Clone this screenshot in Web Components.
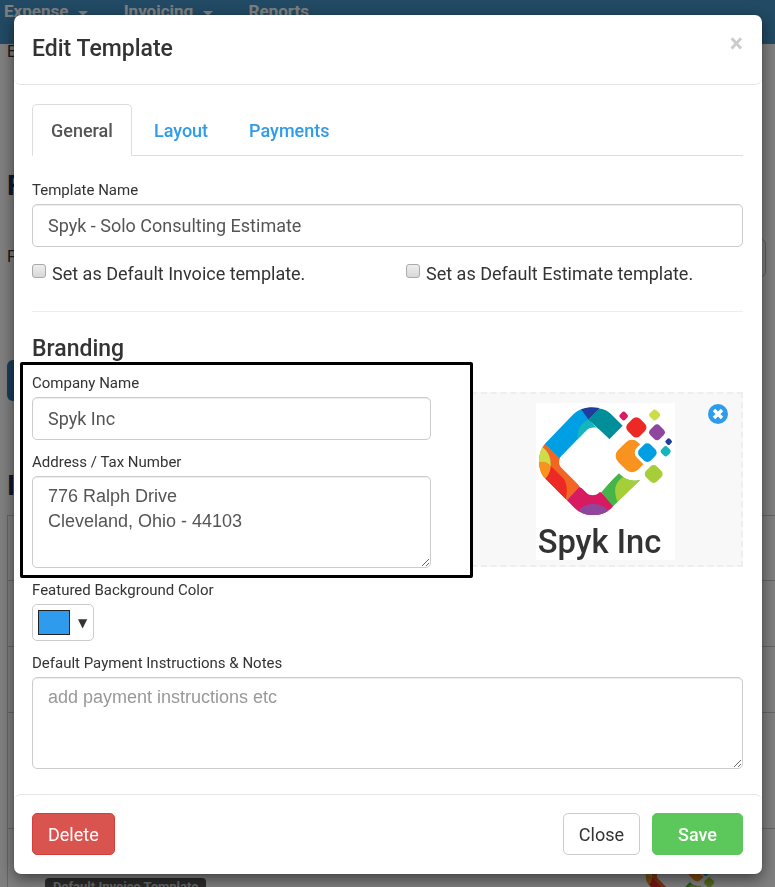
<!DOCTYPE html>
<html lang="en">
<head>
<meta charset="utf-8">
<title>Edit Template</title>
<style>
    body {
        margin: 0;
        background: #fff;
        color: #333;
        font: 18px/25px Roboto, "Open Sans", sans-serif;
    }
</style>
</head>
<body>

<app-page></app-page>

<modal-dialog heading="Edit Template">
    <tab-bar></tab-bar>
    <template-form></template-form>
    <action-button slot="left" kind="danger">Delete</action-button>
    <action-button slot="right">Close</action-button>
    <action-button slot="right" kind="success">Save</action-button>
</modal-dialog>

<script>
class Base extends HTMLElement {

    connectedCallback() {
        if(this.shadowRoot) return;

        this.attachShadow({ mode: 'open' });
        this.shadowRoot.innerHTML = `
            <style>
                *, *::before, *::after { box-sizing: border-box; }
                :host { display: block; }
            </style>
            ${this.template()}
        `;
        this.ready();
    }

    ready() {

    }

}

// rounded squares standing on a corner: x, y, half diagonal, colour
const dots = [
    [281, 63, 13, '#d81b60'],
    [374, 60, 16, '#cddc49'],
    [319, 97, 30, '#ec2924'],
    [381, 112, 23, '#8e479c'],
    [416, 140, 10, '#213d9a'],
    [407, 169, 15, '#14b5bd'],
    [306, 183, 49, '#f7931e'],
    [352, 173, 38, '#fff'],
    [352, 173, 28, '#009fe3'],
    [371, 237, 27, '#a6ce39']
];

class SpykLogo extends Base {

    dot([x, y, half, color]) {
        const side = Math.round(half * 1.72);

        return `<rect x="${x - side / 2}" y="${y - side / 2}" width="${side}" height="${side}"
            rx="${side * 0.3}" fill="${color}" transform="rotate(45 ${x} ${y})"/>`;
    }

    template() {
        const name = this.getAttribute('name');

        return `
            <style>
                svg { display: block; width: 100%; }
                rect.back { fill: #fff; }
                text { font: 500 98px Roboto, sans-serif; fill: #333; }
            </style>
            <svg viewBox="18 24 417 471" role="img" aria-label="Logo">
                <clipPath id="ring">
                    <path d="M278 92L248 62C220 30 160 28 130 58L45 146C21 172 21 225 45 250L130 335C160 369 220 370 250 333L330 255C305 262 284 253 267 235L206 294C196 303 180 303 170 294L94 218C85 209 85 195 94 183L170 105C180 94 198 94 208 104L238 133Z"/>
                </clipPath>
                <rect class="back" x="18" y="24" width="417" height="471"/>
                <g clip-path="url(#ring)">
                    <path fill="#f26522" d="M20 120L45 147 100 200 150 277 106 320 20 260Z"/>
                    <path fill="#009fe3" d="M40 143L150 34 178 73 200 110 88 190Z"/>
                    <path fill="#14b5bd" d="M176 73C150 87 140 105 142 134L220 120Z"/>
                    <path fill="#213d9a" d="M150 38L160 25 200 25 208 42 176 74Z"/>
                    <path fill="#008f9a" d="M208 40L290 60 290 133 238 133 176 74 Z"/>
                    <path fill="#cddc49" d="M20 160L38 157C56 172 63 188 62 213 50 200 38 198 20 204Z"/>
                    <path fill="#f7931e" d="M20 204C38 196 52 202 62 214 62 230 56 240 44 254L20 240Z"/>
                    <path fill="#ec2924" d="M44 254C56 240 60 232 63 214L100 250C112 266 113 290 106 320Z"/>
                    <path fill="#d81b60" d="M106 320L148 276 180 290 214 292 252 332 230 380 140 380Z"/>
                    <ellipse fill="#8e479c" cx="190" cy="366" rx="50" ry="39"/>
                    <path fill="#45b549" d="M214 292L267 230 340 250 250 335Z"/>
                    <path fill="#a6ce39" d="M279 246C252 264 250 290 264 325L340 250Z"/>
                </g>
                ${dots.map(this.dot).join('')}
                ${name ? `<text x="23" y="474">${name}</text>` : ''}
            </svg>
        `;
    }

}

class AppPage extends Base {

    template() {
        return `
            <style>
                :host { height: 100vh; overflow: hidden; }
                nav {
                    display: flex;
                    gap: 36px;
                    height: 44px;
                    padding: 0 4px;
                    background: #4494c8;
                }
                nav a {
                    color: #fff;
                    font-size: 17px;
                    font-weight: 700;
                    line-height: 23px;
                    text-decoration: none;
                }
                nav i {
                    display: inline-block;
                    margin-left: 5px;
                    border: 5px solid transparent;
                    border-top-color: #fff;
                    border-bottom: 0;
                    vertical-align: 1px;
                }
                main { padding: 0 9px 0 7px; font-size: 16px; }
                main p { height: 128px; margin: 0; line-height: 16px; }
                h2 { height: 67px; margin: 0; color: #203060; font-size: 28px; line-height: 28px; }
                .search { display: flex; gap: 20px; line-height: 36px; }
                .search div { flex: 1; height: 38px; border: 1px solid #bbb; border-radius: 5px; }
                .new { width: 90px; height: 41px; margin: 83px 0 71px; border-radius: 6px; background: #337ab7; }
                .list { margin: 0 -9px 0 0; border: 1px solid #ccc; border-right: 0; }
                .list div { height: 66px; border-bottom: 1px solid #ccc; }
                .list div:first-child { height: 65px; }
                .list .tall { height: 116px; }
                .list .card { display: flex; justify-content: space-between; height: 200px; padding: 14px 54px 0 37px; }
                .badge {
                    align-self: flex-start;
                    margin-top: 35px;
                    padding: 0 8px;
                    border-radius: 4px;
                    background: #555;
                    color: #ccc;
                    font-size: 13px;
                    font-weight: 700;
                    line-height: 17px;
                }
                spyk-logo { width: 77px; }
            </style>
            <nav>
                <a href="#">Expense <i></i></a>
                <a href="#">Invoicing <i></i></a>
                <a href="#">Reports</a>
            </nav>
            <main>
                <p>E</p>
                <h2>F</h2>
                <div class="search">F<div></div></div>
                <div class="new"></div>
                <h2 style="height: 43px">I</h2>
                <div class="list">
                    <div></div>
                    <div></div>
                    <div></div>
                    <div class="tall"></div>
                    <div class="card">
                        <span class="badge">Default Invoice Template</span>
                        <spyk-logo></spyk-logo>
                    </div>
                </div>
            </main>
        `;
    }

}

class ModalDialog extends Base {

    template() {
        return `
            <style>
                :host {
                    position: fixed;
                    inset: 0;
                    padding: 15px 13px 13px 14px;
                    overflow: auto;
                    background: rgba(0, 0, 0, .5);
                }
                section {
                    border-radius: 7px;
                    background: #fff;
                    box-shadow: 0 0 1px rgba(0, 0, 0, .5), 0 5px 15px rgba(0, 0, 0, .5);
                }
                header, footer {
                    display: flex;
                    justify-content: space-between;
                    padding: 18px 19px 18px 18px;
                }
                header { border-bottom: 1px solid #e5e5e5; border-radius: 7px; }
                footer { border-top: 1px solid #e5e5e5; border-radius: 7px; padding-bottom: 19px; }
                h1 { margin: 0; font-size: 23px; font-weight: 500; line-height: 31px; }
                header { min-height: 70px; }
                header button {
                    align-self: flex-start;
                    padding: 0;
                    border: 0;
                    background: none;
                    color: #ccc;
                    font: 700 25px/22px Roboto, sans-serif;
                }
                .body { padding: 19px 19px 25px 18px; }
                .group { display: flex; gap: 12px; }
            </style>
            <section role="dialog" aria-labelledby="title">
                <header>
                    <h1 id="title">${this.getAttribute('heading')}</h1>
                    <button type="button" aria-label="Close">×</button>
                </header>
                <div class="body"><slot></slot></div>
                <footer>
                    <div class="group"><slot name="left"></slot></div>
                    <div class="group"><slot name="right"></slot></div>
                </footer>
            </section>
        `;
    }

    ready() {
        this.shadowRoot.querySelector('header button').addEventListener('click', () => this.remove());
    }

}

class ActionButton extends Base {

    template() {
        return `
            <style>
                button {
                    display: block;
                    height: 42px;
                    padding: 0 15px;
                    border: 1px solid #ccc;
                    border-radius: 5px;
                    background: #fff;
                    color: #333;
                    font: 400 18px/25px Roboto, sans-serif;
                }
                :host([kind=danger]) button { border-color: #d43f3a; background: #d9534f; color: #fff; }
                :host([kind=success]) button {
                    padding: 0 25px;
                    border-color: #5cc85c;
                    background: #5cc85c;
                    color: #fff;
                    font-weight: 500;
                }
            </style>
            <button type="button"><slot></slot></button>
        `;
    }

}

class TabBar extends Base {

    template() {
        return `
            <style>
                nav { display: flex; gap: 3px; border-bottom: 1px solid #ddd; }
                a {
                    margin-bottom: -1px;
                    padding: 13px 18px 12px;
                    border: 1px solid transparent;
                    border-radius: 5px 5px 0 0;
                    color: #2f9bec;
                    font-weight: 500;
                    text-decoration: none;
                }
                a.active { border-color: #ddd; border-bottom-color: #fff; color: #555; }
            </style>
            <nav>
                <a class="active" href="#general">General</a>
                <a href="#layout">Layout</a>
                <a href="#payments">Payments</a>
            </nav>
        `;
    }

}

class FormField extends Base {

    control() {
        const value = this.getAttribute('value') || '';
        const hint = this.getAttribute('placeholder') || '';

        if(this.hasAttribute('multiline')) {
            return `<textarea id="control" placeholder="${hint}">${value}</textarea>`;
        }

        return `<input id="control" type="text" value="${value}">`;
    }

    template() {
        return `
            <style>
                label { display: block; margin-bottom: 3px; font-size: 15px; line-height: 21px; }
                input, textarea {
                    display: block;
                    width: 100%;
                    border: 1px solid #ccc;
                    border-radius: 5px;
                    background: #fff;
                    box-shadow: inset 0 1px 1px rgba(0, 0, 0, .075);
                    color: #555;
                }
                input { height: 43px; padding: 0 15px; font: 18px Roboto, sans-serif; }
                textarea {
                    height: 92px;
                    padding: 7px 15px;
                    font: 18px/25px "Liberation Sans", Arial, sans-serif;
                    resize: vertical;
                }
                ::placeholder { color: #999; }
            </style>
            <label for="control">${this.getAttribute('label')}</label>
            ${this.control()}
        `;
    }

}

class ColorField extends FormField {

    control() {
        return `
            <style>
                button {
                    display: flex;
                    align-items: center;
                    gap: 8px;
                    height: 37px;
                    padding: 0 6px 0 5px;
                    border: 1px solid #ccc;
                    border-radius: 5px;
                    background: #fff;
                    color: #333;
                    font: 12px "DejaVu Sans", sans-serif;
                }
                .swatch { width: 32px; height: 25px; border: 1px solid #222; background: ${this.getAttribute('value')}; }
            </style>
            <button id="control" type="button"><span class="swatch"></span>▼</button>
        `;
    }

}

class CheckField extends Base {

    template() {
        return `
            <style>
                label { display: flex; gap: 6px; }
                input {
                    width: 14px;
                    height: 14px;
                    margin: 3px 0 0;
                    border: 1px solid #aaa;
                    border-radius: 3px;
                    background: linear-gradient(#eee, #d8d8d8);
                    appearance: none;
                }
                input:checked { background: #2f9bec; }
            </style>
            <label><input type="checkbox"><slot></slot></label>
        `;
    }

}

class LogoDrop extends Base {

    template() {
        return `
            <style>
                :host {
                    position: relative;
                    display: flex;
                    justify-content: center;
                    align-items: center;
                    height: 175px;
                    padding: 4px 4px 0 0;
                    border: 2px dashed #eee;
                    background: #f8f8f8;
                    box-sizing: border-box;
                }
                spyk-logo { width: 139px; }
                button {
                    position: absolute;
                    top: 10px;
                    right: 13px;
                    padding: 0;
                    border: 0;
                    background: none;
                }
                button svg { display: block; }
            </style>
            <spyk-logo name="Spyk Inc"></spyk-logo>
            <button type="button" aria-label="Remove logo">
                <svg width="20" height="20" viewBox="0 0 20 20">
                    <circle cx="10" cy="10" r="10" fill="#2f9bec"/>
                    <path d="M6 6l8 8m0-8l-8 8" stroke="#fff" stroke-width="3.4"/>
                </svg>
            </button>
        `;
    }

}

class TemplateForm extends Base {

    template() {
        return `
            <style>
                form { padding-top: 24px; }
                .checks { display: grid; grid-template-columns: 1fr 1fr; gap: 37px; margin-top: 14px; }
                hr { margin: 25px 0 22px; border: 0; border-top: 1px solid #eee; }
                h2 { margin: 0; font-size: 23px; font-weight: 500; line-height: 30px; }
                .branding { display: grid; grid-template-columns: 1fr 272px; gap: 40px; margin-top: 9px; }
                .company { position: relative; display: grid; gap: 12px; }
                /* frame drawn round the company fields */
                .company::before {
                    content: '';
                    position: absolute;
                    inset: -11px -42px -10px -12px;
                    z-index: 1;
                    border: 3px solid #000;
                    border-radius: 2px;
                    pointer-events: none;
                }
                logo-drop { margin-top: 19px; }
                color-field { margin-top: 12px; }
                .notes { margin-top: 12px; }
            </style>
            <form>
                <form-field label="Template Name" value="Spyk - Solo Consulting Estimate"></form-field>
                <div class="checks">
                    <check-field>Set as Default Invoice template.</check-field>
                    <check-field>Set as Default Estimate template.</check-field>
                </div>
                <hr>
                <h2>Branding</h2>
                <div class="branding">
                    <div class="company">
                        <form-field label="Company Name" value="Spyk Inc"></form-field>
                        <form-field label="Address / Tax Number" multiline value="776 Ralph Drive&#10;Cleveland, Ohio - 44103"></form-field>
                    </div>
                    <logo-drop></logo-drop>
                </div>
                <color-field label="Featured Background Color" value="#2f9bec"></color-field>
                <form-field class="notes" multiline label="Default Payment Instructions &amp; Notes" placeholder="add payment instructions etc"></form-field>
            </form>
        `;
    }

}

customElements.define('spyk-logo', SpykLogo);
customElements.define('app-page', AppPage);
customElements.define('modal-dialog', ModalDialog);
customElements.define('action-button', ActionButton);
customElements.define('tab-bar', TabBar);
customElements.define('form-field', FormField);
customElements.define('color-field', ColorField);
customElements.define('check-field', CheckField);
customElements.define('logo-drop', LogoDrop);
customElements.define('template-form', TemplateForm);
</script>
</body>
</html>
